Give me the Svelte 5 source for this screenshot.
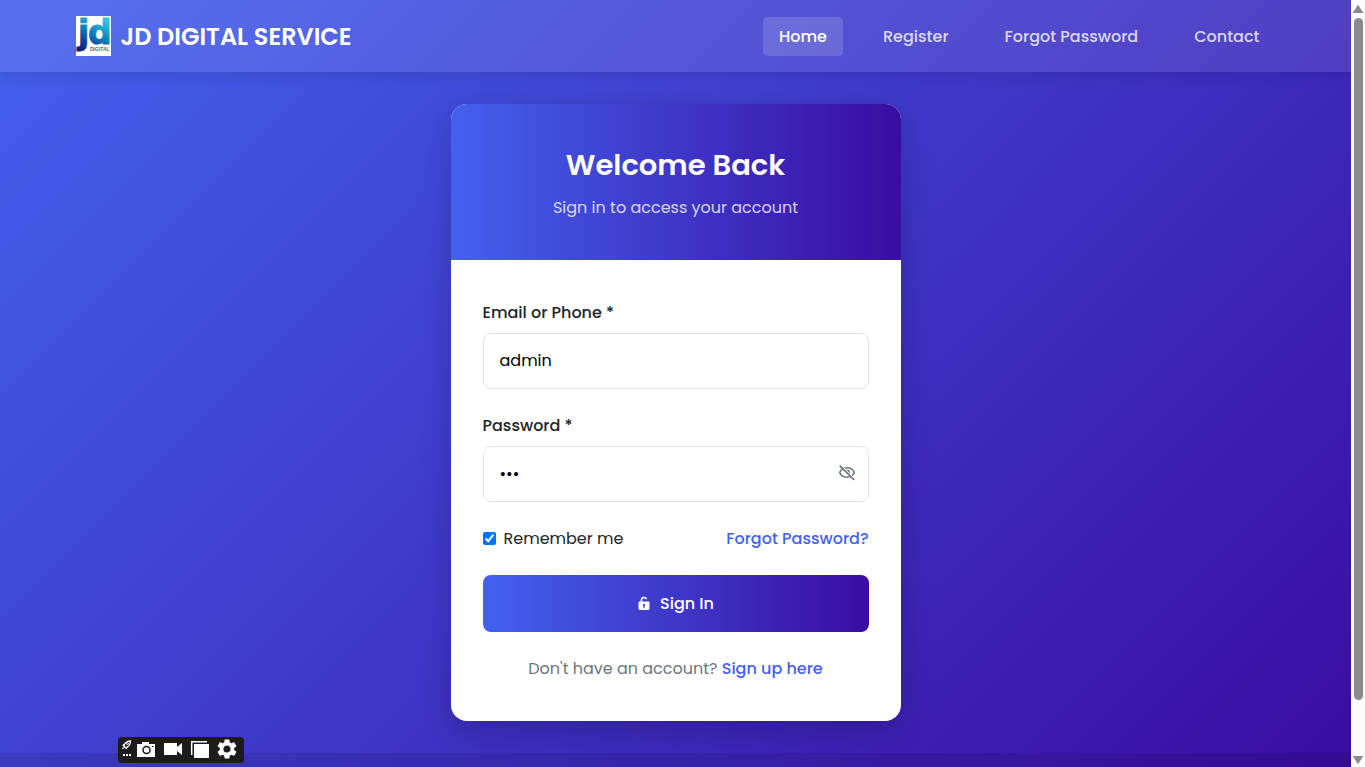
<script>
  const links = ['Home', 'Register', 'Forgot Password', 'Contact'];
  let login = $state('admin');
  let password = $state('123');
  let remember = $state(true);
  let visible = $state(false);
</script>

<div class="shell">
  <div class="page">
    <header>
      <div class="bar">
        <a class="brand" href="#home">
          <svg class="logo" viewBox="0 0 35 40" aria-hidden="true">
            <defs>
              <linearGradient id="ink" gradientUnits="userSpaceOnUse" x1="4" y1="38" x2="24" y2="2">
                <stop offset="0" stop-color="#10106e" />
                <stop offset="0.3" stop-color="#0c3f96" />
                <stop offset="0.6" stop-color="#0a7fc0" />
                <stop offset="1" stop-color="#35c4dc" />
              </linearGradient>
            </defs>
            <rect width="35" height="40" fill="#fff" />
            <text class="mark" x="2" y="28" fill="url(#ink)" stroke="url(#ink)">j</text>
            <text class="mark" x="12" y="28" fill="url(#ink)" stroke="url(#ink)">d</text>
            <text class="tag" x="14" y="35">DIGITAL</text>
          </svg>
          <span>JD DIGITAL SERVICE</span>
        </a>
        <nav>
          {#each links as name, i}
            <a href="#{name}" class:active={i === 0}>{name}</a>
          {/each}
        </nav>
      </div>
    </header>

    <main>
      <section class="card">
        <div class="head">
          <h1>Welcome Back</h1>
          <p>Sign in to access your account</p>
        </div>
        <form onsubmit={(e) => e.preventDefault()}>
          <div class="field">
            <label for="login">Email or Phone *</label>
            <input id="login" type="text" bind:value={login} />
          </div>
          <div class="field">
            <label for="password">Password *</label>
            <div class="secret">
              <input id="password" type={visible ? 'text' : 'password'} value={password} oninput={(e) => (password = e.currentTarget.value)} />
              <button type="button" class="eye" aria-label="Toggle password visibility" onclick={() => (visible = !visible)}>
                <svg viewBox="0 0 18 18" width="18" height="18" fill="none" stroke="#6c757d">
                  <path d="M1.700 8.500C3 5.300 5.800 3.800 9 3.800s6 1.500 7.300 4.700c-1.300 3.200-4.100 4.700-7.300 4.700S3 11.700 1.700 8.500z" stroke-width="1.600" />
                  <path d="M8 5.900a2.800 2.800 0 0 1 3.500 4.200z" fill="#6c757d" stroke="none" />
                  <path d="M3.200 1.500 17.200 15.500" stroke="#fff" stroke-width="1.300" />
                  <path d="M1.700 1.700 16.200 16" stroke-width="1.700" />
                </svg>
              </button>
            </div>
          </div>
          <div class="options">
            <label class="remember"><input type="checkbox" bind:checked={remember} />Remember me</label>
            <a href="#forgot">Forgot Password?</a>
          </div>
          <button class="submit" type="submit">
            <svg viewBox="0 0 14 16" width="14" height="16" aria-hidden="true">
              <path d="M4.500 6.500V4a2.500 2.500 0 0 1 4.900-.7" fill="none" stroke="#fff" stroke-width="1.600" />
              <path fill-rule="evenodd" fill="#fff" d="M3 5.500h8A1.300 1.300 0 0 1 12.500 7v5.500a1.500 1.500 0 0 1-1.500 1.500H3a1.500 1.500 0 0 1-1.500-1.500V7A1.300 1.300 0 0 1 3 5.500zM7 7.900a1.300 1.300 0 0 0-.6 2.400v2h1.200v-2A1.300 1.300 0 0 0 7 7.900z" />
            </svg>
            Sign In
          </button>
          <p class="signup">Don't have an account? <a href="#signup">Sign up here</a></p>
        </form>
      </section>
    </main>
    <footer></footer>
  </div>

  <div class="scroll" aria-hidden="true">
    <svg viewBox="0 0 10 8" width="10" height="8"><path d="M5 .5 9.500 7.500H.5z" fill="#8b8b8b" stroke="#8b8b8b" stroke-linejoin="round" /></svg>
    <div class="track"><div class="thumb"></div></div>
    <svg viewBox="0 0 10 8" width="10" height="8"><path d="M5 7.500.5.500h9z" fill="#8b8b8b" stroke="#8b8b8b" stroke-linejoin="round" /></svg>
  </div>

  <div class="capture">
    <svg class="grip" viewBox="0 0 10 18" width="10" height="18" fill="none" stroke="#fff">
      <path d="M2 6.500C2 3 5 1 8.500 1 8.500 4.500 6.500 7.500 3 7.500zM2 4 .8 6M5 7.500 4 9M1.500 7.500.5 9" stroke-width="1.300" />
      <circle cx="5.600" cy="3.800" r="1" />
      <path d="M1 15h2M4 15h2M7 15h2" stroke-width="2" />
    </svg>
    <button aria-label="Screenshot">
      <svg viewBox="0 0 20 18" width="20" height="18">
        <path fill="#fff" d="M1 4h5V2h7v2h6v13H1z" />
        <circle cx="10.500" cy="10" r="3.500" fill="#fff" stroke="#1c1c1c" stroke-width="1.500" />
        <path d="M16 6.500h1.500" stroke="#1c1c1c" />
      </svg>
    </button>
    <button aria-label="Record video">
      <svg viewBox="0 0 20 18" width="20" height="18"><path fill="#fff" d="M1 3h13v4l5-4v12l-5-4v4H1z" /></svg>
    </button>
    <button aria-label="Gallery">
      <svg viewBox="0 0 20 18" width="20" height="18"><path d="M1.700 15V1.700H17" fill="none" stroke="#fff" stroke-width="1.500" /><path fill="#fff" d="M4 4h15v14H4z" /></svg>
    </button>
    <button aria-label="Settings">
      <svg viewBox="0 0 24 24" width="24" height="24"><path fill="#fff" d="M19.140 12.940c.04-.3.06-.61.06-.94 0-.32-.02-.64-.07-.94l2.030-1.580a.49.49 0 0 0 .12-.61l-1.920-3.320a.488.488 0 0 0-.59-.22l-2.390.96c-.5-.38-1.030-.7-1.620-.94l-.36-2.540a.484.484 0 0 0-.48-.41h-3.840c-.24 0-.43.17-.47.41l-.36 2.540c-.59.24-1.130.57-1.620.94l-2.390-.96c-.22-.08-.47 0-.59.22L2.740 8.870c-.12.21-.08.470.12.610l2.030 1.580c-.05.3-.09.630-.09.940s.02.640.07.940l-2.030 1.580a.49.49 0 0 0-.12.610l1.920 3.320c.12.220.370.290.590.220l2.390-.96c.5.380 1.030.7 1.620.94l.36 2.540c.05.240.240.410.480.410h3.840c.24 0 .44-.17.47-.41l.36-2.540c.59-.24 1.130-.56 1.620-.94l2.390.96c.22.080.470 0 .59-.22l1.920-3.320c.12-.22.070-.47-.12-.61l-2.010-1.580zM12 15.600A3.610 3.610 0 0 1 8.400 12c0-1.980 1.620-3.600 3.600-3.600s3.600 1.620 3.600 3.600-1.620 3.600-3.600 3.600z" /></svg>
    </button>
  </div>
</div>

<style>
  :global(body) { margin: 0; }
  .shell, .shell * { box-sizing: border-box; }
  .shell {
    position: relative;
    display: flex;
    height: 100vh;
    overflow: hidden;
    font: 400 16px/25px Poppins, Inter, sans-serif;
    color: #212529;
  }
  a { color: #4361ee; text-decoration: none; font-weight: 500; }
  h1, p { margin: 0; }
  svg { display: block; flex: none; }
  button { border: 0; padding: 0; background: none; font: inherit; cursor: pointer; }

  .page {
    flex: 1;
    min-width: 0;
    display: flex;
    flex-direction: column;
    background: linear-gradient(135deg, #4361ee, #3a0ca3);
  }
  header {
    padding: 16px 0;
    background: rgba(255, 255, 255, 0.1);
    box-shadow: 0 4px 12px rgba(0, 0, 0, 0.1);
  }
  .bar {
    display: flex;
    align-items: center;
    justify-content: space-between;
    max-width: 1200px;
    margin: 0 auto;
  }
  .brand { display: flex; align-items: center; gap: 10px; color: #fff; font-size: 24px; font-weight: 600; }
  .logo { width: 35px; height: 40px; overflow: visible; }
  .mark { font: 700 33px "DejaVu Sans", sans-serif; stroke-width: 1px; }
  .tag { font: 700 6px "Liberation Sans Narrow", "Liberation Sans", sans-serif; font-size: 5px; fill: #666; }
  nav { display: flex; gap: 24px; }
  nav a { padding: 7px 16px; border-radius: 5px; color: rgba(255, 255, 255, 0.8); }
  nav .active { color: #fff; background: rgba(255, 255, 255, 0.15); }

  main { flex: none; padding: 32px 16px; }
  .card {
    max-width: 450px;
    margin: 0 auto;
    overflow: hidden;
    border-radius: 16px;
    background: #fff;
    box-shadow: 0 10px 30px rgba(0, 0, 0, 0.2);
  }
  .head {
    padding: 40px 32px;
    text-align: center;
    color: #fff;
    background: linear-gradient(90deg, #4361ee, #3a0ca3);
  }
  h1 { margin-bottom: 10px; font-size: 29px; line-height: 42px; font-weight: 600; }
  .head p { line-height: 24px; color: rgba(255, 255, 255, 0.8); }
  form { display: flex; flex-direction: column; gap: 24px; padding: 40px 32px; }
  .field { display: flex; flex-direction: column; gap: 8px; }
  .field label { font-weight: 500; }
  .field input {
    width: 100%;
    height: 56px;
    padding: 0 16px 2px;
    border: 1px solid #e2e4ea;
    border-radius: 8px;
    background: #fff;
    color: #000;
    font: inherit;
    outline: none;
  }
  .secret { position: relative; }
  .eye { position: absolute; right: 13px; top: 18px; }
  .options { display: flex; justify-content: space-between; align-items: center; }
  .remember { display: flex; align-items: center; gap: 8px; }
  .remember input { width: 13px; height: 13px; margin: 0; }
  .submit {
    display: flex;
    align-items: center;
    justify-content: center;
    gap: 9px;
    height: 57px;
    border-radius: 8px;
    color: #fff;
    font-weight: 500;
    background: linear-gradient(90deg, #4361ee, #3a0ca3);
  }
  .signup { text-align: center; color: #6c757d; }
  footer { flex: 1; background: rgba(0, 0, 0, 0.1); }

  .scroll {
    display: flex;
    flex-direction: column;
    align-items: center;
    gap: 5px;
    width: 14px;
    padding: 5px 0 3px;
    background: #fcfcfc;
  }
  .track { flex: 1; }
  .thumb { width: 9px; height: 93%; border-radius: 5px; background: #8b8b8b; }

  .capture {
    position: absolute;
    left: 118px;
    bottom: 4px;
    display: flex;
    align-items: center;
    gap: 7px;
    height: 26px;
    padding: 0 5px 2px 4px;
    border-radius: 4px;
    background: #1c1c1c;
  }
  .grip { margin-right: -3px; }
  .capture button:last-child { margin-left: -2px; }
</style>
